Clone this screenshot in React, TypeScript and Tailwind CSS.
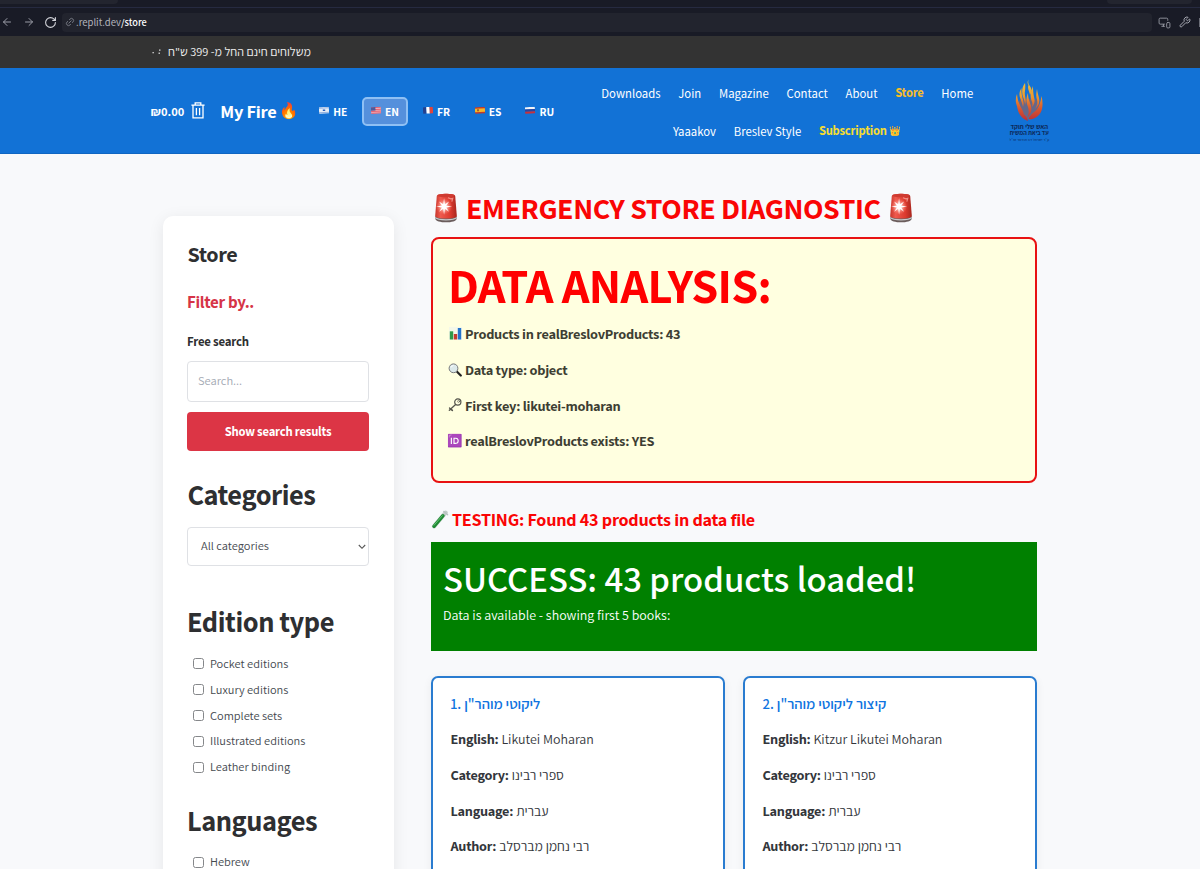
import type { ReactNode } from "react";
import { ArrowLeft, ArrowRight, Link2, MonitorSmartphone, RotateCw, Wrench } from "lucide-react";

const EMOJI = "font-['Noto_Color_Emoji'] font-normal leading-none";

function Siren() {
  return (
    <svg viewBox="0 0 26 32" className="h-[31px] w-[26px] shrink-0 -translate-y-px">
      <defs>
        <linearGradient id="dome" x1="0" x2="1">
          <stop offset="0" stopColor="#c8362c" />
          <stop offset=".25" stopColor="#ee5a4e" />
          <stop offset=".7" stopColor="#dc3a2e" />
          <stop offset="1" stopColor="#a8261e" />
        </linearGradient>
        <radialGradient id="glow">
          <stop offset="0" stopColor="#fff" />
          <stop offset=".4" stopColor="#ffc9c0" stopOpacity=".75" />
          <stop offset="1" stopColor="#ff6a5c" stopOpacity="0" />
        </radialGradient>
      </defs>
      <path d="M2 25h22v2.600c0 5-22 5-22 0z" fill="#6b5d5c" />
      <path d="M2 26.500c3 3 19 3 22 0" stroke="#c9c9cb" strokeWidth="1.300" fill="none" />
      <path d="M3.500 4C4 1 22 1 22.500 4l1.700 21c-1.500 3.200-20.900 3.200-22.400 0z" fill="url(#dome)" />
      <ellipse cx="13" cy="3.600" rx="9" ry="1.800" fill="#cf3b31" />
      <path d="M15 6l3 1 2-.5-1 3.500" stroke="#ffb3aa" strokeWidth="1.200" fill="none" opacity=".7" />
      <circle cx="11" cy="15" r="8.500" fill="url(#glow)" />
      <path d="M11 6.500l.9 6.200 4.300-3-3 4.400 6.100.9-6.100.9 3 4.400-4.300-3-.9 6.200-.9-6.200-4.300 3 3-4.400-6.100-.9 6.100-.9-3-4.400 4.300 3z" fill="#fff" />
    </svg>
  );
}

function Chart() {
  return (
    <svg viewBox="0 0 13 13" className="h-[13px] w-[13px]">
      <rect width="13" height="13" fill="#f4f8ea" />
      <rect x=".8" y="4.300" width="3.400" height="8.200" fill="#2f9a4a" />
      <rect x="4.800" y="7" width="3.400" height="5.500" fill="#c63a2f" />
      <rect x="8.800" y="1" width="3.400" height="11.500" fill="#2474cc" />
    </svg>
  );
}

function Magnifier() {
  return (
    <svg viewBox="0 0 14 14" className="h-[14px] w-[14px]">
      <path d="M8.800 8.500l4 4" stroke="#222" strokeWidth="2.200" strokeLinecap="round" />
      <circle cx="5.500" cy="5.300" r="4.400" fill="#dce9ea" stroke="#77797a" strokeWidth="1" />
      <path d="M3 4.500a3 3 0 0 1 2.500-2" stroke="#fff" fill="none" />
    </svg>
  );
}

function OldKey() {
  return (
    <svg viewBox="0 0 14 14" className="h-[14px] w-[14px]" fill="none" stroke="#55554c" strokeLinecap="round">
      <circle cx="9.800" cy="4" r="3.100" strokeWidth="1.200" />
      <circle cx="10.600" cy="3.400" r="1" strokeWidth=".6" />
      <path d="M7.600 6.500L1.300 12.200M3 10.800l1.500 1.700M1.500 10l2 2" strokeWidth="1.300" />
    </svg>
  );
}

function TestTube() {
  return (
    <svg viewBox="0 0 18 20" className="h-[20px] w-[18px]">
      <path d="M14.600 2.600L3 16.300" stroke="#c3cdc9" strokeWidth="4.200" strokeLinecap="round" />
      <path d="M12 5.700L3 16.300" stroke="#1f8a34" strokeWidth="3.400" strokeLinecap="round" />
      <path d="M11.300 5.700L3 15.300" stroke="#6cc779" strokeWidth=".9" strokeLinecap="round" />
      <path d="M12.700 1.400l4 3.400" stroke="#b6c0c0" strokeWidth="1.200" strokeLinecap="round" />
    </svg>
  );
}

function Trash() {
  return (
    <svg viewBox="0 0 14 17" className="mr-[15px] ml-[7px] h-[17px] w-[14px] -translate-y-px" fill="none" stroke="#fff" strokeWidth="1.300">
      <path d="M.4 3.200h13.200M4.200 3V.9h5.600V3M2 3.400v12.400h10V3.400M5.400 6v7.200M8.600 6v7.200" />
    </svg>
  );
}

const FLAGS: Record<string, ReactNode> = {
  HE: (
    <>
      <rect width="10" height="6.500" fill="#e6eef8" />
      <path d="M0 1h10M0 5.500h10" stroke="#6f96d4" strokeWidth=".7" />
      <path d="M3.800 3.300h2.400" stroke="#2d62bb" strokeWidth="1.500" />
    </>
  ),
  EN: (
    <>
      <rect width="10" height="6.500" fill="#f0b4bb" />
      <path d="M0 .5h10M0 2.500h10M0 4.300h10M0 6.100h10" stroke="#e4586a" strokeWidth=".9" />
      <rect width="4.500" height="3.500" fill="#4f5a9c" />
    </>
  ),
  FR: (
    <>
      <rect width="3.400" height="6.500" fill="#23408e" />
      <rect x="3.400" width="3.300" height="6.500" fill="#fff" />
      <rect x="6.700" width="3.300" height="6.500" fill="#e2453b" />
    </>
  ),
  ES: (
    <>
      <rect width="10" height="6.500" fill="#c23a2c" />
      <rect y="1.600" width="10" height="3.300" fill="#f3b72c" />
      <rect x="2" y="2.200" width="2" height="2" fill="#a8612b" />
    </>
  ),
  RU: (
    <>
      <rect width="10" height="2.300" fill="#f2f4f8" />
      <rect y="2.200" width="10" height="2.200" fill="#2744a0" />
      <rect y="4.400" width="10" height="2.100" fill="#c9303a" />
    </>
  ),
};

function Lang({ code }: { code: string }) {
  const active = code === "EN";
  return (
    <div
      className={
        "flex h-[29px] w-[46px] items-center justify-center gap-[4px] rounded-[5px] border-2 text-[11.600px] font-bold text-white " +
        (active ? "border-[#8fc0f4] bg-[#5590dc]" : "border-transparent")
      }
    >
      <svg viewBox="0 0 10 6.500" className="h-[6.500px] w-[10px] -translate-y-px -rotate-3">{FLAGS[code]}</svg>
      <span>{code}</span>
    </div>
  );
}

function Logo() {
  return (
    <div className="flex w-10 flex-col items-center" dir="rtl">
      <svg viewBox="0 0 28 44" className="h-[44px] w-[28px]">
        <defs>
          <linearGradient id="fire" x1="0" y1="0" x2="0" y2="1">
            <stop offset="0" stopColor="#e8c63c" />
            <stop offset=".4" stopColor="#ee9a2e" />
            <stop offset=".7" stopColor="#d9562f" />
            <stop offset="1" stopColor="#b8303a" />
          </linearGradient>
        </defs>
        <path d="M4 22c3-3 17-3 20 0 2 7-1 15-9 19-9-3-13-11-11-19z" fill="#a8604c" opacity=".55" />
        <path
          fill="url(#fire)"
          d="M14 .5c-2 3 0 5 1.500 7.500s1 5-.5 8c-.5-4-3-6-1.500-10C12 4 12.500 2 14 .5zM10 4c-3 4-3.500 9-2 14 1 3 2 5 2 8 2-6-1-9 0-14 .3-3 .5-5 0-8zM6.500 9C4 13 4 17 5.500 20c1 3 2 5 2.500 8C10 22 6 19 6.500 9zM2 15c-2 5-1.500 10 1 14 2 3 4 5 6 7-1-7-6-9-7-21zM18 7c-2 5-3 9-2 13 1 3 2 4 1 8 3-3 3-7 2-10-.7-4-1-7-1-11zM22 10c-1 5-1 8 0 11 .7 3 0 6-2 9 4-3 5-7 4-11-.6-3-1.500-5-2-9zM26.500 17c-1 6-2 10-5 14-3 3-6 4-8 9 7 1 12-4 13.500-10 1-5 .5-9-.5-13zM13 14c-2 5-2 9 0 14 1 4 1 7-1 11 4-4 5-8 4-12-1-4-3-7-3-13zM2 27c1 8 5 13 11 15-1-7-8-8-11-15z"
        />
      </svg>
      <div className="flex flex-col items-center font-bold whitespace-nowrap text-[#0c2a5c]">
        <span className="text-[6.600px] leading-[7px]">האש שלי תוקד</span>
        <span className="text-[6.200px] leading-[7px]">עד ביאת המשיח</span>
        <span className="text-[4px] leading-[5px] font-semibold opacity-80">ע״ר ישראל דב אודסר זצ״ל</span>
      </div>
    </div>
  );
}

function BrowserBar() {
  return (
    <div className="flex h-9 flex-col bg-[#191b26]">
      <div className="flex h-2 justify-between border-b border-[#262a40]">
        <div className="h-1 w-[118px] rounded-br-md bg-[#23252f]" />
        <div className="mr-2 h-1 w-[85px] rounded-b-md bg-[#23252f]" />
      </div>
      <div className="flex h-7 items-center">
        <ArrowLeft className="ml-[1px] size-[12px] text-[#9a9ca6]" strokeWidth={2} />
        <ArrowRight className="ml-[10px] size-[12px] text-[#9a9ca6]" strokeWidth={2} />
        <RotateCw className="ml-[9px] size-[13px] text-[#d5d6dc]" strokeWidth={2} />
        <div className="ml-[5px] flex h-[19px] w-[1090px] items-center rounded-[4px] bg-[#22242e] pl-[3px] font-['Noto_Sans_CJK_SC'] text-[9.500px]">
          <Link2 className="mr-[1px] size-[10px] -rotate-45 text-[#7f828c]" strokeWidth={2} />
          <span className="flex items-baseline">
            <span className="text-[#b3b5bd]">.replit.dev</span>
            <span className="text-[9.200px] font-medium text-white">/store</span>
          </span>
        </div>
        <MonitorSmartphone className="ml-[6px] size-[13px] shrink-0 text-[#8f919b]" strokeWidth={1.8} />
        <Wrench className="ml-[8px] size-[12px] shrink-0 text-[#a5a7b0]" strokeWidth={2} />
        <div className="ml-[8px] h-[9px] w-px bg-[#6a6c76]" />
      </div>
    </div>
  );
}

const linkClass = "leading-[22px] text-white";
const FILTERS = ["Pocket editions", "Luxury editions", "Complete sets", "Illustrated editions", "Leather binding"];

function Check({ label }: { label: string }) {
  return (
    <label className="flex h-[25.900px] items-center gap-[6px] pl-[6px] text-[12.300px] text-[#44494f]">
      <span className="h-[11px] w-[11px] rounded-[2.500px] border border-[#85878a] bg-white" />
      {label}
    </label>
  );
}

function Sidebar() {
  return (
    <aside className="mt-[62px] h-[760px] w-[231px] shrink-0 rounded-[10px] bg-white pt-[24px] pl-[24px] text-[#2e2f31] shadow-[0_3px_16px_rgba(0,0,0,0.08)]">
      <h1 className="h-7 pl-[0.500px] text-[22.200px] leading-7 font-bold tracking-[-0.018em]">Store</h1>
      <h2 className="mt-[22px] h-6 text-[17px] leading-6 font-bold tracking-[-0.018em] text-[#d63447]">Filter by..</h2>
      <h3 className="mt-[18px] h-5 text-[12.850px] leading-5 font-bold tracking-[-0.015em]">Free search</h3>
      <div className="mt-[9px] flex h-[41px] w-[182px] items-center rounded-[4px] border border-[#dfe1e5] pl-[10px] text-[12.400px] text-[#a3a9b3]">
        Search...
      </div>
      <button className="mt-[10px] block h-[39px] w-[182px] rounded-[4px] bg-[#dc3545] text-[12.700px] font-bold tracking-[-0.015em] text-white">
        Show search results
      </button>
      <h2 className="mt-[26px] h-9 pl-[0.500px] text-[28.600px] leading-9 font-bold tracking-[-0.017em]">Categories</h2>
      <div className="mt-[14px] flex h-[39px] w-[182px] items-center justify-between rounded-[4px] border border-[#dfe1e5] pr-[2px] pl-[13px] text-[12.350px] text-[#45494f]">
        All categories
        <svg viewBox="0 0 8 6" className="h-[6px] w-[8px]" fill="none" stroke="#555" strokeWidth="1.100">
          <path d="M.8 1L4 4.300 7.200 1" />
        </svg>
      </div>
      <h2 className="mt-[38px] h-9 text-[28.600px] leading-9 font-bold tracking-[-0.015em]">Edition type</h2>
      <div className="mt-[11px]">
        {FILTERS.map((f) => (
          <Check key={f} label={f} />
        ))}
      </div>
      <h2 className="mt-[23px] h-9 text-[28.600px] leading-9 font-bold tracking-[-0.015em]">Languages</h2>
      <div className="mt-[10px]">
        <Check label="Hebrew" />
      </div>
    </aside>
  );
}

function Fact({ icon, children }: { icon: ReactNode; children: ReactNode }) {
  return (
    <p className="flex h-[35.800px] items-center gap-[3px] text-[14.400px] font-bold tracking-[-0.018em] text-[#3d3e33]">
      <span className="flex w-[14px] shrink-0 justify-center">{icon}</span>
      {children}
    </p>
  );
}

function Book({ title, english }: { title: string; english: string }) {
  const rows: [string, string, boolean][] = [
    ["English:", english, false],
    ["Category:", "ספרי רבינו", true],
    ["Language:", "עברית", true],
    ["Author:", "רבי נחמן מברסלב", true],
  ];
  return (
    <article className="h-[260px] w-[294px] rounded-[7px] border-2 border-[#2a7cd0] bg-white pt-[14px] pl-[17.500px] shadow-[0_2px_10px_rgba(0,0,0,0.06)]">
      <h3 className="mb-[5px] h-6 text-[14.800px] leading-6 font-semibold text-[#0f74e0]">{title}</h3>
      {rows.map(([k, v, he]) => (
        <p key={k} className="flex h-[35.800px] items-baseline gap-[3px] text-[14.300px] leading-[35px] whitespace-nowrap text-[#33363b]">
          <b className="tracking-[-0.018em]">{k}</b>
          <span className={he ? "text-[13.800px]" : "text-[13.900px]"}>{v}</span>
        </p>
      ))}
    </article>
  );
}

export default function App() {
  return (
    <div className="h-[869px] w-[1200px] overflow-hidden bg-[#f8f9fb] font-['Assistant','Noto_Sans_CJK_SC','Open_Sans',sans-serif]">
      <BrowserBar />
      <div className="flex h-8 items-center bg-[#333333] pl-[152px] text-[12.300px] text-[#eeeeee]">
        <svg viewBox="0 0 10 6" className="mr-[6px] h-[6px] w-[10px]" fill="#ddd">
          <rect x=".5" y="3" width="1.300" height="1.300" />
          <rect x="7" y=".5" width="1.500" height="1.200" />
          <rect x="6.500" y="3.600" width="1.500" height="1.200" />
        </svg>
        <span dir="rtl">משלוחים חינם החל מ- 399 ש"ח</span>
      </div>

      <header className="flex h-[86px] items-center border-b border-[#0f66c2] bg-[#1272d6] pt-[2px] pl-[150.500px] text-white">
        <span className="pt-px text-[12.500px] font-bold">₪0.00</span>
        <Trash />
        <span className="text-[18.400px] font-bold tracking-[-0.015em]">My Fire</span>
        <span className={"ml-[3px] w-[19px] text-[15.500px] " + EMOJI}>🔥</span>
        <div className="ml-[12px] flex gap-[5.600px]">
          {["HE", "EN", "FR", "ES", "RU"].map((c) => (
            <Lang key={c} code={c} />
          ))}
        </div>
        <nav className="ml-[37.500px] flex w-[374px] flex-col gap-4 font-['Noto_Sans_CJK_SC'] text-[11.350px]">
          <div className="flex justify-center gap-[17.700px]">
            {["Downloads", "Join", "Magazine", "Contact", "About"].map((t) => (
              <a key={t} className={linkClass}>{t}</a>
            ))}
            <a className="font-['Assistant'] text-[12.600px] leading-[22px] font-bold tracking-[-0.015em] text-[#f7bd2c]">Store</a>
            <a className={linkClass}>Home</a>
          </div>
          <div className="flex justify-center gap-[17.700px]">
            <a className={linkClass}>Yaaakov</a>
            <a className={linkClass}>Breslev Style</a>
            <a className="flex items-center font-['Assistant'] text-[12.600px] leading-[22px] font-bold tracking-[-0.015em] text-[#f5dc33]">
              Subscription<span className={"ml-[3px] text-[9.500px] tracking-normal " + EMOJI}>👑</span>
            </a>
          </div>
        </nav>
        <div className="ml-[35px] -translate-y-px">
          <Logo />
        </div>
      </header>

      <div className="flex pl-[163px]">
        <Sidebar />
        <main className="ml-[37px] w-[606px] shrink-0">
          <h1 className="mt-[36px] flex h-9 items-center gap-[7px] pl-[2px] text-[30.100px] leading-9 font-bold tracking-[-0.012em] whitespace-nowrap text-[#fa0505]">
            <Siren />
            EMERGENCY STORE DIAGNOSTIC
            <Siren />
          </h1>
          <section className="mt-[11px] h-[246px] rounded-[8px] border-[2.400px] border-[#e81212] bg-[#ffffe0] px-[15px] pt-[16px]">
            <h2 className="h-[61px] text-[48.900px] leading-[60px] font-bold tracking-[-0.015em] text-[#ff0000]">DATA ANALYSIS:</h2>
            <Fact icon={<Chart />}>Products in realBreslovProducts: 43</Fact>
            <Fact icon={<Magnifier />}>Data type: object</Fact>
            <Fact icon={<OldKey />}>First key: likutei-moharan</Fact>
            <Fact icon={<span className={"text-[12.500px] " + EMOJI}>🆔</span>}>realBreslovProducts exists: YES</Fact>
          </section>
          <h2 className="mt-[25px] flex h-6 items-center gap-[3px] text-[18.150px] font-bold tracking-[-0.012em] text-[#fa0505]">
            <TestTube />
            TESTING: Found 43 products in data file
          </h2>
          <section className="mt-[10px] h-[109px] bg-[#008000] px-[12px] pt-[12px] text-white">
            <div className="h-12 font-['Noto_Sans_CJK_SC'] text-[32.850px] leading-12 font-medium">SUCCESS: 43 products loaded!</div>
            <p className="mt-px h-6 text-[13.900px] leading-6">Data is available - showing first 5 books:</p>
          </section>
          <div className="mt-[25px] flex justify-between">
            <Book title={'1. ליקוטי מוהר"ן'} english="Likutei Moharan" />
            <Book title={'2. קיצור ליקוטי מוהר"ן'} english="Kitzur Likutei Moharan" />
          </div>
        </main>
      </div>
    </div>
  );
}
